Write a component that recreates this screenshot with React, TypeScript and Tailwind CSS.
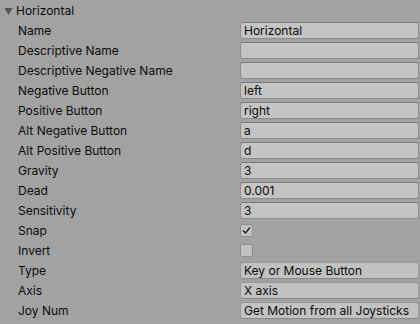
import React from "react";

type Row =
  | { label: string; kind: "text"; value: string }
  | { label: string; kind: "check"; value: boolean }
  | { label: string; kind: "select"; value: string };

const rows: Row[] = [
  { label: "Name", kind: "text", value: "Horizontal" },
  { label: "Descriptive Name", kind: "text", value: "" },
  { label: "Descriptive Negative Name", kind: "text", value: "" },
  { label: "Negative Button", kind: "text", value: "left" },
  { label: "Positive Button", kind: "text", value: "right" },
  { label: "Alt Negative Button", kind: "text", value: "a" },
  { label: "Alt Positive Button", kind: "text", value: "d" },
  { label: "Gravity", kind: "text", value: "3" },
  { label: "Dead", kind: "text", value: "0.001" },
  { label: "Sensitivity", kind: "text", value: "3" },
  { label: "Snap", kind: "check", value: true },
  { label: "Invert", kind: "check", value: false },
  { label: "Type", kind: "select", value: "Key or Mouse Button" },
  { label: "Axis", kind: "select", value: "X axis" },
  { label: "Joy Num", kind: "select", value: "Get Motion from all Joysticks" },
];

export default function App() {
  return (
    <div
      className="w-[420px] h-[324px] overflow-hidden bg-[#a2a2a2] text-[12px] text-[#0c0c0c]"
      style={{ fontFamily: "Inter, 'Liberation Sans', sans-serif" }}
    >
      <div className="flex items-center h-[20px] pl-[4px] pt-[2px]">
        <svg width="9" height="9" viewBox="0 0 9 9" className="mr-[3px]">
          <polygon points="0.5,1 8.5,1 4.5,8" fill="#555555" />
        </svg>
        <span className="leading-none">Horizontal</span>
      </div>
      {rows.map((r) => (
        <div key={r.label} className="flex items-center h-[20px]">
          <div className="w-[240px] pl-[18px] pt-[2px] leading-none">{r.label}</div>
          <div className="flex-1 flex items-center">
            {r.kind === "text" && (
              <div className="h-[17px] w-[179px] flex items-center pl-[3px] pt-[2px] bg-[#c4c4c4] border border-[#8e8e8e] border-t-[#7c7c7c] rounded-[3px] leading-none">
                {r.value}
              </div>
            )}
            {r.kind === "select" && (
              <div className="h-[17px] w-[179px] flex items-center pl-[3px] pt-[2px] bg-[#c2c2c2] border border-[#999999] border-b-[#8a8a8a] rounded-[3px] leading-none">
                {r.value}
              </div>
            )}
            {r.kind === "check" && (
              <div className="w-[13px] h-[13px] bg-[#c2c2c2] border border-[#8e8e8e] rounded-[2px] flex items-center justify-center">
                {r.value && (
                  <svg width="9" height="9" viewBox="0 0 9 9">
                    <polyline points="1,4.5 3.5,7 8,1.5" fill="none" stroke="#222222" strokeWidth="1.4" />
                  </svg>
                )}
              </div>
            )}
          </div>
        </div>
      ))}
    </div>
  );
}
